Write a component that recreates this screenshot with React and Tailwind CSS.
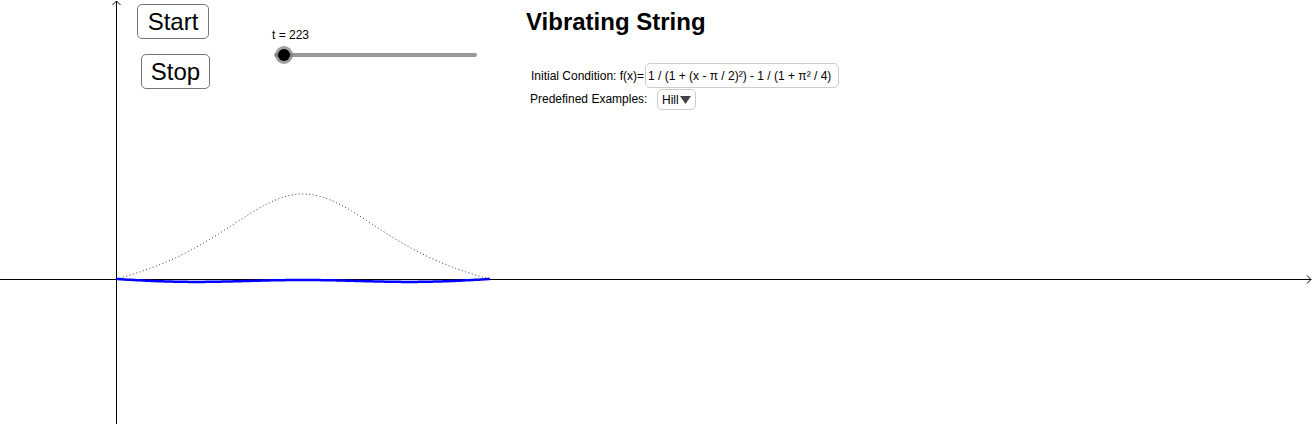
import React from "react";

function hillPath() {
  const pts = [];
  const c = 1 / (1 + (Math.PI * Math.PI) / 4);
  for (let i = 0; i <= 200; i++) {
    const x = (Math.PI * i) / 200;
    const f = 1 / (1 + (x - Math.PI / 2) ** 2) - c;
    pts.push(`${(116 + x * 119).toFixed(2)},${(279 - f * 119.5).toFixed(2)}`);
  }
  return "M" + pts.join(" L");
}

function stringPath() {
  const pts = [];
  for (let i = 0; i <= 200; i++) {
    const s = i / 200;
    const off = 2.5 * Math.sin(Math.PI * s) + 1.5 * Math.sin(3 * Math.PI * s);
    pts.push(`${(116 + s * 374).toFixed(2)},${(279 + off).toFixed(2)}`);
  }
  return "M" + pts.join(" L");
}

export default function App() {
  const font = { fontFamily: '"Liberation Sans", Arial, sans-serif' };
  return (
    <div className="relative w-[1315px] h-[427px] bg-white overflow-hidden" style={font}>
      <svg className="absolute inset-0" width="1315" height="427">
        <line x1="116.5" y1="1" x2="116.5" y2="424" stroke="#000" strokeWidth="1" />
        <path d="M112.5 5 L116.5 1 L120.5 5" fill="none" stroke="#000" strokeWidth="1" />
        <line x1="0" y1="279.5" x2="1311" y2="279.5" stroke="#000" strokeWidth="1" />
        <path d="M1307 275.5 L1311 279.5 L1307 283.5" fill="none" stroke="#000" strokeWidth="1" />
        <path d={hillPath()} fill="none" stroke="#333" strokeWidth="1" strokeDasharray="1 2.5" />
        <path d={stringPath()} fill="none" stroke="#0000ff" strokeWidth="2.5" />
      </svg>

      {/* Buttons */}
      <div className="absolute left-[137px] top-[4px] flex flex-col items-start gap-[15px]">
        <button className="w-[72px] h-[35px] border border-[#777] rounded-[5px] bg-white text-[24px] leading-none text-black flex items-center justify-center">
          Start
        </button>
        <button className="ml-[4px] w-[69px] h-[35px] border border-[#777] rounded-[5px] bg-white text-[24px] leading-none text-black flex items-center justify-center">
          Stop
        </button>
      </div>

      {/* Slider */}
      <div className="absolute left-[272px] top-[29px] flex flex-col">
        <div className="text-[12px] leading-none text-black">t = 223</div>
        <div className="relative mt-[12px] ml-[2px] w-[203px] h-[4px] rounded-full bg-[#999]">
          <div className="absolute left-[1px] top-[-7px] w-[18px] h-[18px] rounded-full bg-[#777]/70 flex items-center justify-center">
            <div className="w-[12px] h-[12px] rounded-full bg-black" />
          </div>
        </div>
      </div>

      {/* Right panel */}
      <div className="absolute left-[526px] top-[10px] flex flex-col text-black">
        <div className="text-[24px] font-bold leading-none">Vibrating String</div>
        <div className="mt-[29px] ml-[5px] flex items-center text-[12px]">
          <span className="pr-[1px]">Initial Condition: f(x)=</span>
          <div className="w-[194px] h-[25px] border border-[#ccc] rounded-[5px] bg-white flex items-center pl-[2px]">
            1 / (1 + (x - π / 2)²) - 1 / (1 + π² / 4)
          </div>
        </div>
        <div className="ml-[4px] flex items-start text-[12px]">
          <span className="pt-[2px] w-[127px]">Predefined Examples:</span>
          <div className="mt-[1px] w-[39px] h-[21px] border border-[#ccc] rounded-[5px] bg-white flex items-center pl-[4px]">
            Hill
            <svg width="11" height="8" className="ml-[1px]" viewBox="0 0 11 8">
              <path d="M0 0 L11 0 L5.5 8 Z" fill="#444" />
            </svg>
          </div>
        </div>
      </div>
    </div>
  );
}
